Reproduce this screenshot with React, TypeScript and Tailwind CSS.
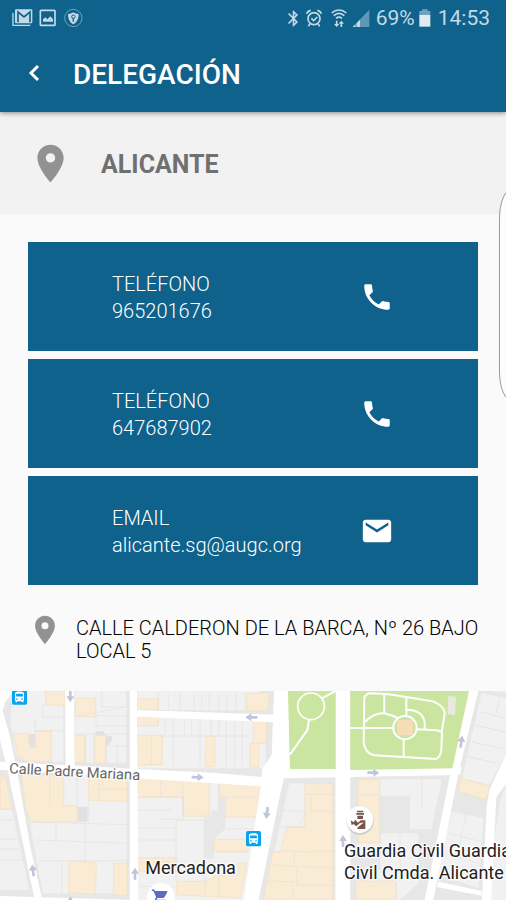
import type { ReactNode } from 'react'
import { MdBluetooth, MdDirectionsBus, MdEmail, MdPhone, MdPlace, MdShoppingCart } from 'react-icons/md'

interface Contact {
  label: string
  value: string
  href: string
  kind: 'phone' | 'email'
}

const contacts: Contact[] = [
  { label: 'TELÉFONO', value: '965201676', href: 'tel:965201676', kind: 'phone' },
  { label: 'TELÉFONO', value: '647687902', href: 'tel:647687902', kind: 'phone' },
  { label: 'EMAIL', value: 'alicante.sg@augc.org', href: 'mailto:alicante.sg@augc.org', kind: 'email' },
]

function StatusBar() {
  return (
    <div className="flex h-9 items-center justify-between pl-3 pr-4 text-[#c3dae6]">
      <div className="flex items-center gap-[6px]">
        {/* Mail stack */}
        <svg width={21} height={18} viewBox="0 0 63 54" fill="none">
          <path d="M3 12v37h52" stroke="currentColor" strokeWidth={4} />
          <path d="M12 1h46a3 3 0 0 1 3 3v36a3 3 0 0 1-3 3H12a3 3 0 0 1-3-3V4a3 3 0 0 1 3-3z" fill="currentColor" />
          <path d="M18 40V9l18 15L54 9v31" stroke="#0e628b" strokeWidth={5} />
        </svg>
        {/* Picture */}
        <svg width={18} height={18} viewBox="0 0 54 54" fill="none">
          <rect x={4} y={4} width={44} height={45} rx={2} stroke="currentColor" strokeWidth={5} />
          <path d="M12 38v-7l7-6 6 6 9-9 8 9v7z" fill="currentColor" />
        </svg>
        {/* Shield */}
        <svg width={20} height={20} viewBox="0 0 60 60" fill="none">
          <circle cx={31} cy={30} r={26} stroke="currentColor" strokeWidth={2} opacity={0.8} />
          <path d="M31 13c5 4 10 5 16 5 0 14-4 24-16 31-12-7-16-17-16-31 6 0 11-1 16-5z" fill="currentColor" />
          <path d="M31 30v11" stroke="#0e628b" strokeWidth={4} />
          <circle cx={31} cy={26} r={5} stroke="#0e628b" strokeWidth={3} />
        </svg>
      </div>

      <div className="flex items-center">
        <MdBluetooth size={19} />
        {/* Alarm */}
        <svg width={18} height={20} viewBox="0 0 54 60" fill="none" stroke="currentColor" strokeWidth={5} className="ml-[2px]">
          <circle cx={27} cy={32} r={18} />
          <path d="M19 31l7 7 11-11M5 17c2-6 6-9 12-10M49 17c-2-6-6-9-12-10M15 47l-5 8M39 47l5 8" />
        </svg>
        {/* Wifi */}
        <svg width={18} height={20} viewBox="0 0 54 60" fill="none" stroke="currentColor" strokeWidth={5} className="ml-[7px]">
          <path d="M5 15c13-12 31-12 44 0M11 23c10-9 22-9 32 0M18 31c6-5 12-5 18 0" />
          <path d="M20 38v13M34 57V44" />
          <path d="M12 48h16l-8 9zM26 47h16l-8-9z" fill="currentColor" stroke="none" />
        </svg>
        {/* Signal */}
        <svg width={18} height={20} viewBox="0 0 54 60" fill="currentColor" className="ml-1">
          <path d="M2 57L52 5v52z" opacity={0.45} />
          <path d="M2 57l8-8v8zM14 57V46l10-11v22z" />
        </svg>
        <span className="ml-[6px] text-[21px] leading-6">69%</span>
        {/* Battery */}
        <svg width={12} height={18} viewBox="0 0 36 54" className="ml-1">
          <path d="M1 6h8V1h17v5h8v12H1z" fill="#6fa2bb" />
          <path d="M1 18h33v35H1z" fill="#e0ecf2" />
        </svg>
        <span className="ml-[7px] text-[21px] leading-6">14:53</span>
      </div>
    </div>
  )
}

function ContactCard({ label, value, href, kind }: Contact) {
  const Icon = kind === 'phone' ? MdPhone : MdEmail
  return (
    <a
      href={href}
      className="flex h-[109px] items-center bg-[#0e628b] px-[84px] text-[20px] font-[350] leading-[27px] text-white"
    >
      <span className="flex flex-1 flex-col pt-[2px]">
        <span>{label}</span>
        <span>{value}</span>
      </span>
      <Icon size={34} />
    </a>
  )
}

const lots = [
  'M42 3h98v42h50v170H78L48 195 30 85z',
  'M225 3h153v215H225z',
  'M412 3h368v57H412zM412 80h385v155H412z',
  'M0 360h36l52 240H0z',
  'M65 255h315v355H128L90 400z',
  'M412 265h370v118l-40 247H412z',
  'M868 280h130v350H790z',
  'M1075 268h250l-30 150h-65v-100h-90v170H1075z',
  'M1140 430h115v150l-55 50h-110v-90h50z',
  'M1355 365l95 20-15 210-130-45z',
  'M1500 330l18-40v340h-60z',
]

const buildings = [
  'M137 3h58v43h-50l-8-12z',
  'M228 25h59v55h-62z',
  'M40 130h45l3 42h18v-50h48v93H75l-22-18z',
  'M225 136h31v82h-33zM283 136h35v84h-35z',
  'M412 27h63v32h-63zM412 80h63v27h-63zM412 136h75v88h-77z',
  'M64 255h127v92h40v49H92L75 345z',
  'M266 262h115v72l-115-3z',
  'M0 255l18 12 18 91H0z',
  'M207 513l82 4-2 95-82-3zM341 519h41v96h-42z',
  'M412 265h216v114h-78v-57H412z',
  'M412 503h118v40H412z',
  'M658 265h122v117H676v-60h-20z',
  'M740 10h67l-3 48-12 4h-52z',
  'M760 90h40v70h-24v72h-26v-72h10z',
  'M618 138h26v92h-28z',
  'M642 448h101v38H642zM655 555h60v-36h26l-20 104-191-8v-41h85z',
  'M915 281h83v349H790l28-145h22l20-75h55z',
  'M1075 268h64v190h-64zM1067 573h121v57H1067z',
]

// Thin parcel boundaries inside the blocks
const parcelLines =
  'M140 45h-12v37h60M105 82v40h87M378 50l-153 30M378 77h-90v30h90M305 3v48h73M225 132h153M256 136v82M283 136v82M318 136v84M352 168v50M322 168h56' +
  'M0 390h40M0 448h55M0 477h60M0 510h70M90 396l291 8M105 450l275 10M115 512h268M168 396v55M256 396v118M185 515v93M149 255v90M231 262v85M266 331v65M298 262v70M298 298h83' +
  'M454 138v88M475 3v55M475 107v-27M412 322h70v-55M415 360h100M415 415h113M415 450h113M415 590h113M505 10v50M540 10v50M583 10v50M605 10v50M628 10v50M656 10v50M680 10v50M708 10v50M735 10v50' +
  'M480 138h268M496 82v55M520 82v148M553 82v55M575 82v55M600 82v148M633 82v57M657 82v58M678 82v148M704 90v140M727 90v140M760 160h36' +
  'M480 322h70v66h-70M548 265v112M528 390h84v115M528 390v183M656 265v96M676 322h104M676 416h90M615 555v60M658 560v65M740 486l-85-3M530 515h-50' +
  'M846 362h68M915 313h83M934 313v50h64M840 410l80 3M836 482l80 3 82-2M820 525l85 5 93 3M890 535v50h108M883 485v45M800 573l90 3M880 582v48M915 362l-15 48' +
  'M1075 315h64M1265 268v90M1190 573v57M1140 432v105M1200 432v140' +
  'M1345 430l100 25M1330 490l110 30M1400 370l-25 110'

const arrows: [number, number, number][] = [
  [211, 18, 180],
  [99, 542, -8],
  [405, 552, 0],
  [755, 82, -90],
  [592, 262, 92],
  [801, 368, 188],
  [1119, 248, 90],
  [1384, 156, 8],
  [1029, 454, 0],
  [211, 638, 0],
]

function BusStop({ x, y }: { x: number; y: number }) {
  return (
    <g>
      <rect x={x} y={y} width={45} height={46} rx={5} fill="#06a5ef" />
      <MdDirectionsBus x={x + 2} y={y + 3} size={41} color="#fff" />
    </g>
  )
}

function MapLabel({ x, y, children }: { x: number; y: number; children: ReactNode }) {
  return (
    <text x={x} y={y} fontSize={54} fill="#212121" stroke="#fff" strokeWidth={8} strokeOpacity={0.8} paintOrder="stroke">
      {children}
    </text>
  )
}

function StreetMap() {
  return (
    <svg viewBox="0 3 1518 627" preserveAspectRatio="xMidYMin slice" className="block h-[209px] w-full" role="img" aria-label="Mapa">
      <rect y={3} width={1518} height={627} fill="#e7e7e7" />
      <g fill="#f1f1f1">{lots.map(d => <path key={d} d={d} />)}</g>
      <g fill="#f9ebd4" stroke="#f3dfbd" strokeWidth={2}>{buildings.map(d => <path key={d} d={d} />)}</g>
      <path d={parcelLines} fill="none" stroke="#dfdfdf" strokeWidth={2} strokeOpacity={0.8} />
      <path d="M612 390v115h30v-57l34-32v-94h-20v40h-22v15h-22z" fill="#e7e7e7" />
      <path d="M88 132h17v40H92l-5-18zM232 350h31v46h-31zM287 124h25v14h25v10l-12 18h-8v-30h-30z" fill="#e1e1e1" />

      {/* Streets */}
      <g fill="#fff">
        <path d="M0 3h40L15 38 8 62l20 70 23 110 40 230 36 158H104L68 455 25 250 0 150z" />
        <path d="M195 3h27l2 230h-27z" />
        <path d="M389 3h22l4 627h-26z" />
        <path d="M0 215l400 21 240 12 170 15v28l-400-26L0 239z" />
        <path d="M411 60l415 14v23L411 80z" />
        <path d="M822 3h43l5 236 648-10-151 26-515 10-14 60-62 305h-45l51-340 5-55 28-40z" />
        <path d="M1007 3h44v627h-45z" />
        <path d="M1405 3h30l-60 250-75 377h-26l76-375z" />
        <path d="M860 237l500-4v22l-510 6z" />
        <path d="M1315 575l130 28v14l-135-26z" />
        <path d="M0 618l400 12H0z" />
      </g>

      {/* East side of the avenue */}
      <path d="M1436 3h82v200l-38 92-30 60-80-15 8-75z" fill="#e7e7e7" />
      <path d="M1445 10l73 15v165l-50 95-82-20z" fill="#f1f1f1" />
      <path d="M1440 65l78 20M1425 105l93 22M1415 155l95 22M1405 200l85 20M1500 22l-12 50" fill="none" stroke="#dfdfdf" strokeWidth={2} />
      <path d="M1480 3h38v9z" fill="#f9ebd4" />
      <path d="M1382 265l88 24-12 40-85-25z" fill="#f9ebd4" stroke="#f3dfbd" strokeWidth={2} />
      <path d="M1518 192v90l-29 40-15 308h-28l14-280 8-50z" fill="#fff" />

      {/* Park */}
      <path d="M864 3h143v234H870z" fill="#cae5a0" />
      <path d="M1051 3h356l-50 232-306 5z" fill="#cae5a0" />
      <g fill="none" stroke="#fff" strokeWidth={6}>
        <circle cx={933} cy={49} r={40} strokeWidth={5} />
        <path d="M965 25l42-22M927 90l-5 30-52 74" />
        <circle cx={1215} cy={113} r={35} />
        <path d="M1104 10c35 0 65 2 100 9l75 12c30 2 55 20 55 40l-8 50c-2 70 0 75-17 86l-185-11c-22-4-33-25-33-40l2-135z" strokeLinejoin="round" />
        <path d="M1051 114h128M1093 98c20-22 40-29 60-28 15 4 28 8 39 14M1153 70V10M1219 22v55M1219 60c35-2 60 15 55 57M1250 118l62 3 14 5M1211 148v50" />
      </g>
      <rect x={1192} y={90} width={47} height={46} fill="#f5ddb5" />
      <path d="M1345 17l23 3-3 55-22-3z" fill="#e8e9df" />

      {arrows.map(([x, y, angle]) => (
        <path
          key={`${x}-${y}`}
          d="M0-19l12 18H4v18h-8V-1h-8z"
          fill="#c0c5dc"
          transform={`translate(${x} ${y}) rotate(${angle})`}
        />
      ))}

      <BusStop x={36} y={-2} />
      <BusStop x={738} y={423} />

      <circle cx={483} cy={620} r={41} fill="#fff" />
      <MdShoppingCart x={453} y={594} size={56} color="#5c6bc0" />

      {/* Police marker */}
      <circle cx={1080} cy={393} r={41} fill="#ccc" />
      <circle cx={1079} cy={389} r={40} fill="#fff" />
      <path
        d="M1071 362h19v5h-19zM1069 369h23v5h-23zM1072 377h17v10h-17zM1052 391l9 6 5-8 8 9 8-7h14v26h-24v-4l20-16-13 3-10 9-9-7-5 4z"
        fill="#795548"
      />

      <text
        x={27} y={250} fontSize={44} fill="#666" stroke="#fff" strokeWidth={7} strokeOpacity={0.8}
        paintOrder="stroke" transform="rotate(3 27 250)"
      >
        Calle Padre Mariana
      </text>
      <MapLabel x={436} y={552}>Mercadona</MapLabel>
      <MapLabel x={1032} y={502}>Guardia Civil Guardia</MapLabel>
      <MapLabel x={1032} y={567}>Civil Cmda. Alicante</MapLabel>
    </svg>
  )
}

export default function App() {
  return (
    <div className="relative overflow-hidden bg-[#fafafa] font-[Roboto,sans-serif]">
      <header className="relative h-28 bg-[#0e628b] shadow-[0_1px_5px_rgba(0,0,0,0.45)]">
        <StatusBar />
        <div className="flex h-[76px] items-center pl-6 text-white">
          <button type="button" aria-label="Volver" className="flex w-[49px]">
            <svg width={20} height={20} viewBox="0 0 20 20" fill="none" stroke="currentColor" strokeWidth={3}>
              <path d="M14 2L7 9l7 7" />
            </svg>
          </button>
          <h1 className="pt-px text-[28px] font-medium leading-8">DELEGACIÓN</h1>
        </div>
      </header>

      <section className="flex h-[102px] items-center gap-7 bg-[#f2f2f2] pl-7 text-[#707070]">
        <MdPlace size={45} color="#929292" />
        <h2 className="pt-1 text-[25px] font-bold leading-8">ALICANTE</h2>
      </section>

      <main>
        <div className="flex flex-col gap-2 px-7 pt-7">
          {contacts.map(contact => <ContactCard key={contact.value} {...contact} />)}
        </div>

        <div className="flex gap-[14px] pb-7 pl-7 pr-5 pt-8">
          <MdPlace size={34} color="#929292" className="-mt-1 flex-shrink-0" />
          <address className="text-[20px] font-light not-italic leading-[23px] text-black">
            CALLE CALDERON DE LA BARCA, Nº 26 BAJO LOCAL 5
          </address>
        </div>

        <StreetMap />
      </main>

      {/* Edge panel handle */}
      <div className="absolute -right-4 top-[190px] h-[210px] w-[23px] rounded-[16px/40px] border border-[#999] bg-[#fdfdfd]" />
    </div>
  )
}
